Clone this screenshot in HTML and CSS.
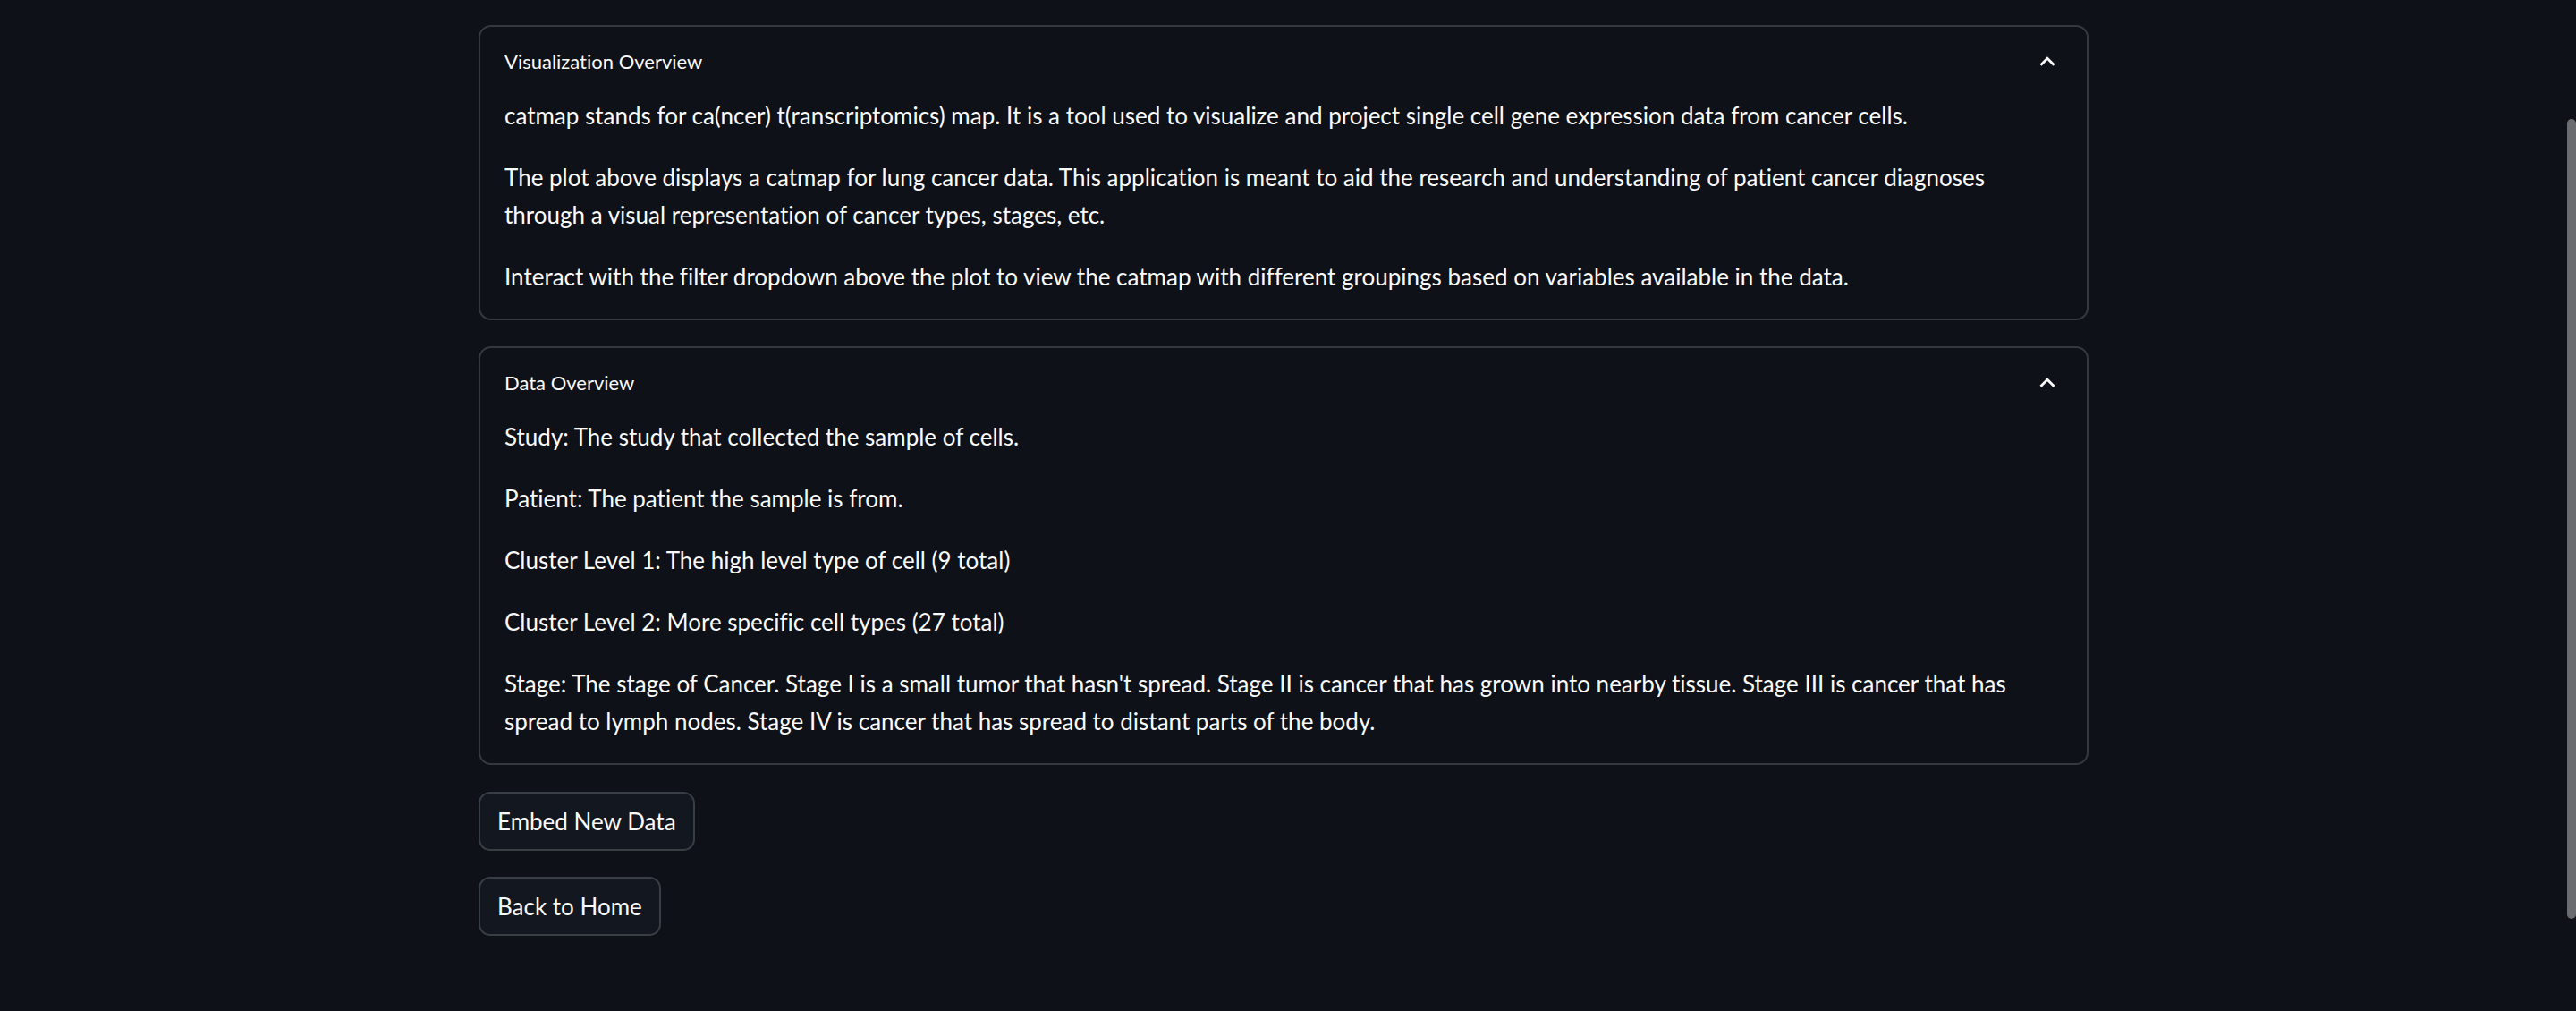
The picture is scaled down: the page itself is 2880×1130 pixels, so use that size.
FILE: index.html
```html
<!DOCTYPE html>
<html lang="en">
<head>
<meta charset="utf-8">
<title>catmap</title>
<link rel="stylesheet" href="styles.css">
</head>
<body>
<div class="app">
  <main class="block">
    <section class="expander">
      <div class="exp-head">
        <span class="exp-title">Visualization Overview</span>
        <svg class="chev" viewBox="0 0 24 24" aria-hidden="true"><path d="M7.41 15.41L12 10.83l4.59 4.58L18 14l-6-6-6 6z"/></svg>
      </div>
      <div class="exp-body">
        <p>catmap stands for ca(ncer) t(ranscriptomics) map. It is a tool used to visualize and project single cell gene expression data from cancer cells.</p>
        <p>The plot above displays a catmap for lung cancer data. This application is meant to aid the research and understanding of patient cancer diagnoses through a visual representation of cancer types, stages, etc.</p>
        <p>Interact with the filter dropdown above the plot to view the catmap with different groupings based on variables available in the data.</p>
      </div>
    </section>
    <section class="expander">
      <div class="exp-head">
        <span class="exp-title">Data Overview</span>
        <svg class="chev" viewBox="0 0 24 24" aria-hidden="true"><path d="M7.41 15.41L12 10.83l4.59 4.58L18 14l-6-6-6 6z"/></svg>
      </div>
      <div class="exp-body">
        <p>Study: The study that collected the sample of cells.</p>
        <p>Patient: The patient the sample is from.</p>
        <p>Cluster Level 1: The high level type of cell (9 total)</p>
        <p>Cluster Level 2: More specific cell types (27 total)</p>
        <p>Stage: The stage of Cancer. Stage I is a small tumor that hasn't spread. Stage II is cancer that has grown into nearby tissue. Stage III is cancer that has spread to lymph nodes. Stage IV is cancer that has spread to distant parts of the body.</p>
      </div>
    </section>
    <button class="btn btn-first" type="button">Embed New Data</button>
    <button class="btn" type="button">Back to Home</button>
  </main>
  <div class="scroll-thumb"></div>
</div>
</body>
</html>
```
FILE: styles.css
```css
html, body {
  margin: 0;
  padding: 0;
  background: #0e1117;
}
body {
  font-family: Lato, "Noto Sans", sans-serif;
  font-variant-ligatures: none;
  color: #fafafa;
  height: 1130px;
  overflow: hidden;
}
.app {
  padding-right: 10px;
}
.block {
  width: 1800px;
  margin: 0 auto;
  padding-top: 28px;
  display: flex;
  flex-direction: column;
  align-items: flex-start;
  gap: 29px;
}
.expander {
  align-self: stretch;
  border: 2px solid rgba(250, 250, 250, 0.17);
  border-radius: 14px;
}
.exp-head {
  display: flex;
  justify-content: space-between;
  align-items: center;
  padding: 20px 27px 21px 27px;
}
.exp-title {
  font-size: 22px;
  line-height: 37px;
}
.chev {
  width: 34px;
  height: 34px;
  fill: #fafafa;
  margin-top: -5px;
  margin-bottom: -5px;
}
.exp-body {
  padding: 0 27px 26px;
}
.exp-body p {
  margin: 0 0 27px;
  font-size: 26px;
  line-height: 42px;
}
.exp-body p:last-child {
  margin-bottom: 0;
}
.btn {
  font-family: Lato, "Noto Sans", sans-serif;
  font-variant-ligatures: none;
  font-size: 26px;
  line-height: 42px;
  color: #fafafa;
  background: #131720;
  border: 2px solid rgba(250, 250, 250, 0.17);
  border-radius: 13px;
  padding: 10px 19px;
  margin: 0;
}
.btn-first {
  margin-top: 1px;
}
.scroll-thumb {
  position: fixed;
  right: 0;
  top: 133px;
  width: 10px;
  height: 894px;
  background: #6b6c70;
  border-radius: 5px;
}
```
